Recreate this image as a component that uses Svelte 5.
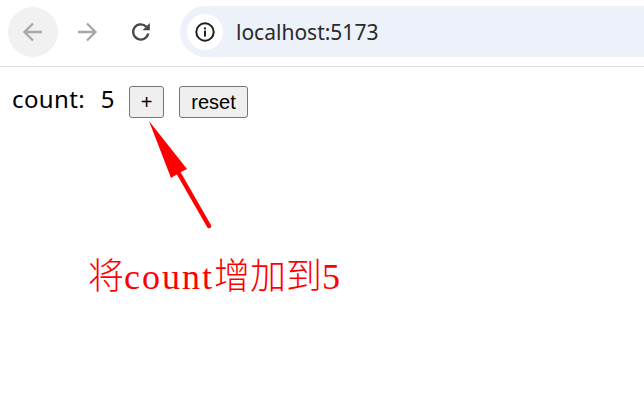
<script>
  let count = $state(5);
</script>

<div class="page">
  <header class="toolbar">
    <button class="nav back" aria-label="back">
      <svg width="24" height="24" viewBox="0 0 24 24"><path d="M21 12H4M12 3.5 3.5 12l8.500 8.500" /></svg>
    </button>
    <button class="nav forward" aria-label="forward">
      <svg width="24" height="24" viewBox="0 0 24 24"><path d="M3 12h17M12 3.500 20.500 12 12 20.500" /></svg>
    </button>
    <button class="nav reload" aria-label="reload">
      <svg width="24" height="24" viewBox="0 0 24 24">
        <path d="M19.200 13.500A7.600 7.600 0 1 1 17.200 6.600" />
        <path class="solid" d="M13.500 10.200h7.300V2.900z" />
      </svg>
    </button>
    <div class="omnibox">
      <span class="info">
        <svg width="24" height="24" viewBox="0 0 24 24">
          <circle cx="12" cy="12" r="8.700" />
          <rect class="solid" x="11" y="10.600" width="2" height="6" />
          <rect class="solid" x="11" y="7.400" width="2" height="2" />
        </svg>
      </span>
      <span class="url">localhost:5173</span>
    </div>
  </header>

  <main class="content">
    <span class="label">count:&nbsp;{count}</span>
    <button class="btn plus" onclick={() => count++}>+</button>
    <button class="btn reset" onclick={() => (count = 0)}>reset</button>
  </main>

  <svg class="arrow" width="80" height="120" viewBox="0 0 80 120">
    <path d="M9 1 47 49 39 53 31 58z" fill="#f00" />
    <path d="M38 52 69 106" stroke="#f00" stroke-width="4.500" stroke-linecap="round" fill="none" />
  </svg>
  <div class="note">将<span class="latin">count</span>增加到5</div>
</div>

<style>
  :global(body) {
    margin: 0;
    background: #fff;
  }
  .page {
    position: relative;
    height: 418px;
    overflow: hidden;
  }
  .toolbar {
    display: flex;
    align-items: center;
    height: 67px;
    padding: 0 0 3px 8px;
    box-sizing: border-box;
    border-bottom: 1px solid #e0e0e0;
  }
  .nav {
    width: 50px;
    height: 50px;
    margin-right: 4px;
    padding: 0;
    border: 0;
    border-radius: 50%;
    background: none;
    display: flex;
    align-items: center;
    justify-content: center;
  }
  .nav path {
    fill: none;
    stroke-width: 2.300;
  }
  .nav path.solid {
    fill: #474747;
    stroke: none;
  }
  .back {
    background: #f1f1f1;
  }
  .back path,
  .forward path {
    stroke: #a8a8a8;
  }
  .reload path {
    stroke: #474747;
  }
  .omnibox {
    flex: 1;
    height: 51px;
    margin-left: 10px;
    display: flex;
    align-items: center;
    gap: 13px;
    padding-left: 7px;
    border-radius: 26px 0 0 26px;
    background: #ecf1fa;
  }
  .info {
    width: 36px;
    height: 36px;
    border-radius: 50%;
    background: #fff;
    display: flex;
    align-items: center;
    justify-content: center;
  }
  .info circle {
    fill: none;
    stroke: #1f1f1f;
    stroke-width: 2;
  }
  .info .solid {
    fill: #1f1f1f;
  }
  .url {
    font: 21px "Noto Sans", "Open Sans", sans-serif;
    color: #2a2a2a;
  }
  .content {
    display: flex;
    align-items: flex-start;
    padding: 19px 0 0 12px;
  }
  .label {
    font: 24px "Noto Sans", sans-serif;
    color: #000;
    width: 102px;
    margin-right: 15px;
    line-height: 26px;
    letter-spacing: 0.4px;
    word-spacing: 9px;
    white-space: nowrap;
  }
  .btn {
    height: 32px;
    padding: 0;
    border: 1px solid #767676;
    border-radius: 3px;
    background: #efefef;
    color: #000;
    font: 20px "Liberation Sans", Arial, sans-serif;
  }
  .plus {
    width: 35px;
    margin-right: 15px;
  }
  .reset {
    width: 69px;
  }
  .arrow {
    position: absolute;
    left: 140px;
    top: 120px;
  }
  .note {
    position: absolute;
    left: 88px;
    top: 247px;
    color: #f00;
    font: 300 36px "Liberation Serif", "Noto Sans CJK SC", serif;
    white-space: nowrap;
  }
  .latin {
    letter-spacing: 2px;
  }
</style>
